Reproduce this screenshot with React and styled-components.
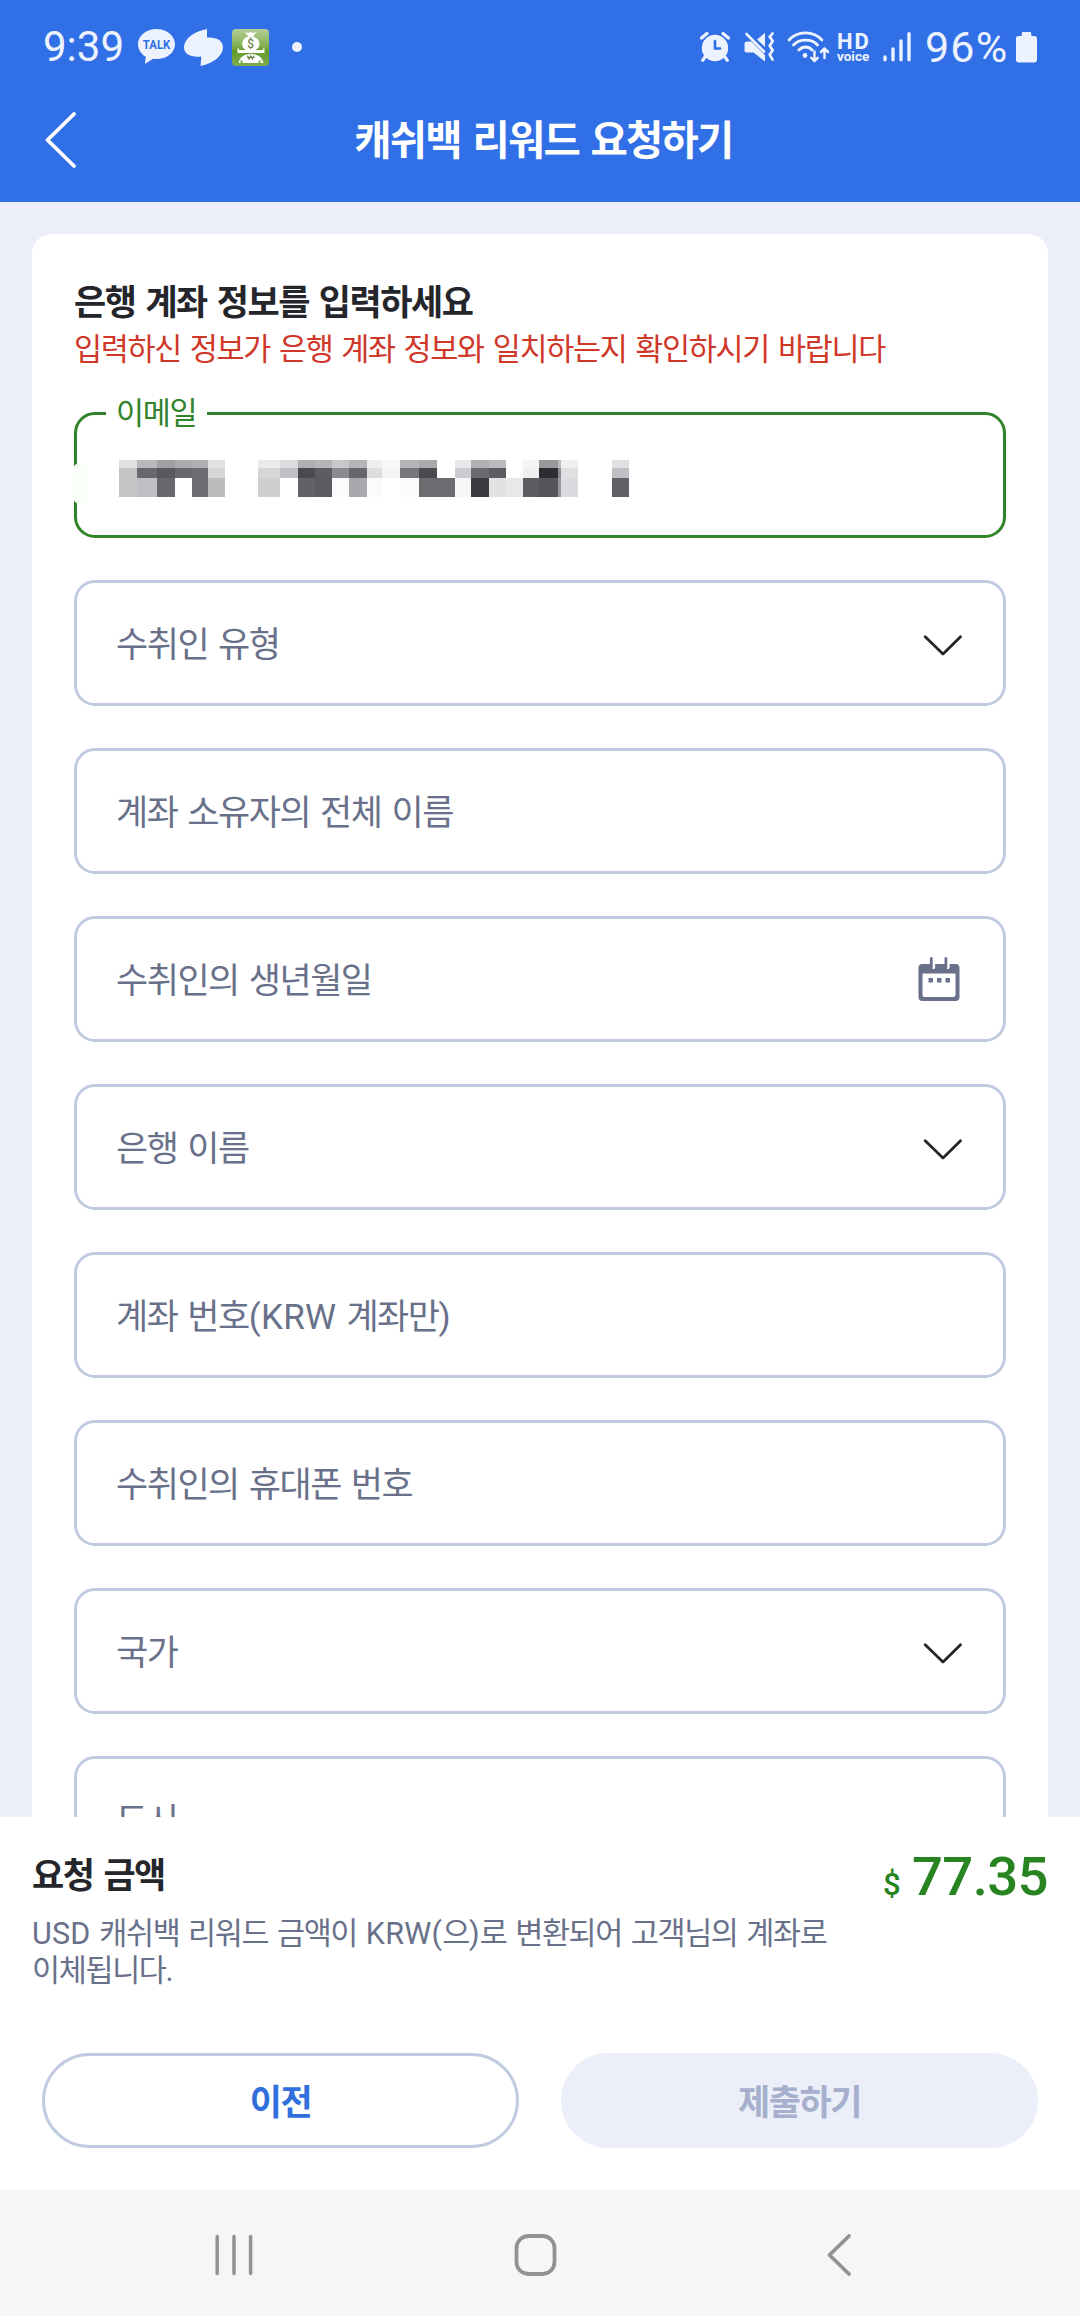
import styled, { createGlobalStyle } from "styled-components";

const GlobalStyle = createGlobalStyle`
  * {
    box-sizing: border-box;
  }
  body {
    margin: 0;
    overflow: hidden;
    background: #fff;
    font-family: Roboto, "Noto Sans CJK KR", sans-serif;
    word-break: keep-all;
  }
  svg {
    display: block;
    flex-shrink: 0;
  }
`;

const Screen = styled.div`
  display: flex;
  flex-direction: column;
  width: 1080px;
  height: 2316px;
  overflow: hidden;
  background: #eceff9;
`;

const StatusBar = styled.div`
  display: flex;
  align-items: center;
  justify-content: space-between;
  height: 94px;
  padding: 0 43px;
  background: #316fe7;
  color: #edf3fe;
`;
const StatusGroup = styled.div`
  display: flex;
  align-items: center;
`;
const Time = styled.span`
  width: 95px;
  font-size: 42px;
  line-height: 48px;
`;
const StatusIcon = styled.svg`
  margin-left: ${({ $gap }) => $gap || 0}px;
`;
const Dot = styled.span`
  width: 10px;
  height: 10px;
  margin-left: 23px;
  border-radius: 50%;
  background: #edf3fe;
`;
const HdVoice = styled.div`
  display: flex;
  flex-direction: column;
  width: 34px;
  margin-left: 7px;
  font-weight: 700;
`;
const Hd = styled.span`
  font-size: 22px;
  line-height: 18px;
  letter-spacing: 2px;
`;
const Voice = styled.span`
  font-size: 13.5px;
  line-height: 11px;
`;
const Battery = styled.span`
  width: 85px;
  margin-left: 14px;
  font-size: 43px;
  line-height: 48px;
  letter-spacing: 1.2px;
`;

const AppBar = styled.header`
  display: grid;
  grid-template-columns: 107px 1fr 100px;
  align-items: center;
  height: 108px;
  padding: 0 0 14px;
  background: #316fe7;
`;
const BackButton = styled.button`
  display: flex;
  padding: 2px 0 0 43px;
  border: none;
  background: none;
`;
const Title = styled.h1`
  margin: 0;
  color: #fff;
  font-size: 40.5px;
  font-weight: 700;
  line-height: 56px;
  letter-spacing: -0.043em;
  word-spacing: 0.08em;
  text-align: center;
`;

const Content = styled.main`
  flex: 1;
  min-height: 0;
  overflow: hidden;
  padding: 32px 32px 0;
`;
const Card = styled.section`
  padding: 46px 42px;
  border-radius: 20px;
  background: #fff;
`;
const Heading = styled.h2`
  margin: 0;
  color: #25262b;
  font-size: 35px;
  font-weight: 700;
  line-height: 48px;
  letter-spacing: -0.043em;
  word-spacing: 0.08em;
`;
const Warning = styled.p`
  margin: 2px 0 42px;
  color: #cf3729;
  font-size: 30.5px;
  line-height: 40px;
  letter-spacing: -0.043em;
  word-spacing: 0.085em;
`;
const Fields = styled.div`
  display: flex;
  flex-direction: column;
  gap: 42px;
`;
const Field = styled.div`
  position: relative;
  display: flex;
  align-items: center;
  justify-content: space-between;
  height: 126px;
  padding: 4px 41px 0 39px;
  border: 3px solid ${({ $active }) => ($active ? "#31832a" : "#c0cbdf")};
  border-radius: 21px;
`;
const Placeholder = styled.span`
  padding-top: 1px;
  color: #69718a;
  font-size: 35px;
  line-height: 48px;
  letter-spacing: -0.043em;
  word-spacing: 0.08em;
`;
// latin letters and brackets keep their natural width
const Latin = styled.span`
  letter-spacing: 0.008em;
`;
const FloatingLabel = styled.span`
  position: absolute;
  top: -21px;
  left: 29px;
  padding: 0 11px 0 10px;
  background: #fff;
  color: #31832a;
  font-size: 30.5px;
  line-height: 40px;
  letter-spacing: -0.043em;
`;
const Smudge = styled.span`
  position: absolute;
  top: 48px;
  left: -4px;
  width: 14px;
  height: 41px;
  border-radius: 7px;
  background: #fbfffa;
`;

const Footer = styled.footer`
  height: 373px;
  padding: 36px 32px 42px;
  background: #fff;
`;
const AmountRow = styled.div`
  display: flex;
  justify-content: space-between;
`;
const Amount = styled.div`
  display: flex;
  align-items: baseline;
  gap: 12px;
  height: 49px;
  margin-top: -1px;
  color: #278420;
  font-size: 54.5px;
  font-weight: 500;
  line-height: 48px;
  letter-spacing: -0.6px;
`;
const Currency = styled.span`
  font-size: 31px;
`;
const Note = styled.p`
  width: 820px;
  height: 75px;
  margin: 14px 0 63px;
  color: #69718a;
  font-size: 30.5px;
  line-height: 37px;
  letter-spacing: -0.044em;
  word-spacing: 0.08em;
`;
const Actions = styled.div`
  display: grid;
  grid-template-columns: 1fr 1fr;
  gap: 42px;
  padding: 0 10px;
`;
const ActionButton = styled.button`
  height: 95px;
  padding: 6px 0 0;
  border: 3px solid ${({ $muted }) => ($muted ? "#eceff9" : "#c0cbdf")};
  border-radius: 48px;
  background: ${({ $muted }) => ($muted ? "#eceff9" : "#fff")};
  color: ${({ $muted }) => ($muted ? "#a6b0cc" : "#316fdc")};
  font-family: inherit;
  font-size: 35px;
  font-weight: 700;
  line-height: 48px;
  letter-spacing: -0.043em;
`;

const NavBar = styled.nav`
  display: grid;
  grid-template-columns: 300px 313px 27px;
  height: 126px;
  padding: 43px 0 0 213px;
  background: #f5f6f8;
`;

const TalkIcon = () => (
  <StatusIcon width="37" height="36" viewBox="0 0 37 36" fill="#edf3fe">
    <path d="M18.5 0C8.3 0 0 6.8 0 15.200c0 5.400 3.200 9.800 7.800 12.500L6.900 35l8.200-5.200c1.100.2 2.200.3 3.400.3C28.700 30.100 37 23.600 37 15.200S28.700 0 18.500 0z" />
    <text x="4.800" y="20" fontSize="12.300" fontWeight="700" fill="#316fe7" textLength="27.500" lengthAdjust="spacingAndGlyphs">
      TALK
    </text>
  </StatusIcon>
);

const LeafIcon = () => (
  <StatusIcon $gap={9} width="39" height="37" viewBox="0 0 39 37" fill="#edf3fe">
    <path d="M23 0v8.500C33 8 39 11.500 39 18.500c0 8-9 15.500-22.500 18.500l.8-9.500C6.500 28.500 0 25 0 18.500 0 10 9.500 2.500 23 0z" />
  </StatusIcon>
);

const MoneyIcon = () => (
  <StatusIcon $gap={9} width="37" height="37" viewBox="0 0 37 37">
    <defs>
      <linearGradient id="money" x1="0" y1="0" x2="0" y2="1">
        <stop offset="0" stopColor="#b4cf97" />
        <stop offset="0.45" stopColor="#83b052" />
        <stop offset="0.6" stopColor="#649c2b" />
        <stop offset="1" stopColor="#7fac4b" />
      </linearGradient>
    </defs>
    <rect width="37" height="37" rx="4" fill="url(#money)" />
    <path d="M13 3l3 1 2.500-1L21 4l3.500-1-3.500 4.500c4 1 6.500 4 6.500 7.500 0 3-1.700 5-4 6H31v-1.500h1.500V24h-27v-4.500H7V21h7c-2.500-1-3.800-3-3.800-6 0-3.500 2.300-6.500 6.300-7.500z" fill="#fff" />
    <path d="M6.500 34c1-6 6-9 12.300-9S30 28 31.500 34z" fill="#fff" />
    <path d="M8.500 31l2 3m-2 0l2-2m18-1l-2 3m2 0l-2-2" stroke="#649c2b" strokeWidth="1" />
    <text x="18.700" y="19" fontSize="12" textAnchor="middle" fill="#56722f">$</text>
    <path d="M15.500 26.500l1.500 4 1.700-4 1.700 4 1.500-4M15 28.300h7.500" stroke="#56722f" strokeWidth="0.900" fill="none" />
  </StatusIcon>
);

const AlarmIcon = () => (
  <StatusIcon width="30" height="30" viewBox="0 0 30 30" fill="none" stroke="#edf3fe">
    <circle cx="15" cy="16" r="13.200" fill="#edf3fe" stroke="none" />
    <path d="M1.500 6L7 1.500M28.500 6L23 1.500M5 25l-2.300 3.300M25 25l2.300 3.300" strokeWidth="3.200" strokeLinecap="round" />
    <path d="M15 9v7.500h5" stroke="#316fe7" strokeWidth="2.700" strokeLinecap="round" strokeLinejoin="round" />
  </StatusIcon>
);

const MuteIcon = () => (
  <StatusIcon $gap={14} width="31" height="30" viewBox="0 0 31 30" fill="#edf3fe">
    <path d="M3 9.500h4.500L21 23v6.500L9.500 20.500H3c-1.700 0-2.500-1-2.500-2.300v-6.400c0-1.300.8-2.300 2.500-2.300zM13 7.500L21 .8V15z" />
    <path d="M2.500 2L20 19.500" stroke="#edf3fe" strokeWidth="2.600" strokeLinecap="round" />
    <path d="M28.500 1.500l-2.800 3.300 3 4.300-3 4.600 3 4.600-3 4.300 2.800 5" fill="none" stroke="#edf3fe" strokeWidth="2.700" strokeLinecap="round" strokeLinejoin="round" />
  </StatusIcon>
);

const WifiIcon = () => (
  <StatusIcon $gap={12} width="43" height="32" viewBox="0 0 43 32" fill="none" stroke="#edf3fe" strokeWidth="2.800" strokeLinecap="round" strokeLinejoin="round">
    <path d="M2 9c8.500-9.500 24.500-9.500 33 0M6.500 14c6-6.500 18.500-6.500 24 0M11.800 19c4-4 9.600-4 13.400 0" />
    <circle cx="18" cy="24.500" r="2.400" fill="#edf3fe" stroke="none" />
    <path d="M27.500 20.500v9.500m-3.200-3.200l3.200 3.200 3.200-3.200M37.500 27V17.500m-3.500 3.500l3.500-3.500 3.500 3.500" strokeWidth="2.500" />
  </StatusIcon>
);

const SignalIcon = () => (
  <StatusIcon $gap={12} width="28" height="30" viewBox="0 0 28 30" stroke="#edf3fe" strokeWidth="3.400" strokeLinecap="round">
    <path d="M2 25v2.800M10 17v10.800M18 9v18.800M26 1.800v26" />
  </StatusIcon>
);

const BatteryIcon = () => (
  <StatusIcon $gap={6} width="21" height="31" viewBox="0 0 22 31" fill="#edf3fe" preserveAspectRatio="none">
    <path d="M7.500 0h7c1 0 1.500.6 1.500 1.500V4h3.500C21 4 22 5 22 6.500v21c0 2-1 3-3 3H3c-2 0-3-1-3-3v-21C0 5 1 4 2.500 4H6V1.500C6 .6 6.500 0 7.500 0z" />
  </StatusIcon>
);

const ChevronIcon = () => (
  <svg width="40" height="24" viewBox="0 0 40 24" fill="none" stroke="#25262b" strokeWidth="2.800" strokeLinecap="round" strokeLinejoin="round">
    <path d="M3.200 3.700L21 21 38.500 3.700" />
  </svg>
);

const CalendarIcon = () => (
  <svg width="44" height="50" viewBox="0 0 44 50">
    <path d="M4.500 8h33a4 4 0 0 1 4 4v29a4 4 0 0 1-4 4h-33a4 4 0 0 1-4-4v-29a4 4 0 0 1 4-4zM4.500 17.500v21.500c0 1.300.8 2 2 2h29c1.200 0 2-.7 2-2V17.500z" fill="#69718a" fillRule="evenodd" />
    <path d="M15.500 4.500v7M30 4.500v7" stroke="#fff" strokeWidth="3.200" strokeLinecap="round" />
    <path d="M13.300 2.500v9M27.900 2.500v9" stroke="#69718a" strokeWidth="2.800" strokeLinecap="round" />
    <path d="M10.500 22h4.500v4.500h-4.500zM19 22h4.500v4.500H19zM27.500 22H32v4.500h-4.500z" fill="#69718a" />
  </svg>
);

// [x, width, top, middle, bottom]
const mosaic = [
  [0, 18, "#e2e2e5", "#c5c5c8", "#c5c5c8"],
  [18, 20, "#b8b8bb", "#67686c", "#c0c0c4"],
  [38, 18, "#a0a0a4", "#58595d", "#66686d"],
  [56, 17, "#ababae", "#67686c", "#fff"],
  [73, 16, "#b0b0b3", "#6c6d71", "#6c6e73"],
  [89, 17, "#e2e2e5", "#d6d6d8", "#bcbcbf"],
  [139, 22, "#ebebec", "#d6d6d8", "#cfcfd2"],
  [161, 18, "#dddddf", "#c0c0c4", "#fff"],
  [179, 17, "#b0b0b3", "#4a4b50", "#606267"],
  [196, 17, "#b5b5b8", "#5c5d61", "#5a5c61"],
  [213, 17, "#c8c8ca", "#8a8b8f", "#fbfbfb"],
  [230, 18, "#b5b5b8", "#66676b", "#a8a9ac"],
  [248, 15, "#eeeeef", "#dddddf", "#fbfbfb"],
  [263, 18, "#f8f8f8", "#f3f3f3", "#fff"],
  [281, 19, "#b5b5b8", "#77787c", "#fbfbfb"],
  [300, 18, "#aaaaad", "#4a4b50", "#6a6c70"],
  [318, 18, "#fff", "#fff", "#6a6c70"],
  [336, 16, "#e8e8ea", "#ccccd0", "#f6f6f6"],
  [352, 18, "#b0b0b3", "#6a6b6f", "#3a3b3f"],
  [370, 17, "#bbbbbd", "#5c5d61", "#e2e2e4"],
  [387, 17, "#fff", "#fff", "#e8e8ea"],
  [404, 16, "#f4f5f5", "#eeeff0", "#5c5d61"],
  [420, 19, "#99999b", "#2c2d31", "#55565a"],
  [439, 3, "#bbbbbd", "#8a8b8f", "#99999b"],
  [442, 17, "#efeff0", "#e0e0e2", "#dadbdf"],
  [493, 17, "#e0e0e2", "#c0c0c4", "#606166"],
];

const HiddenEmail = () => (
  <svg width="513" height="39" viewBox="-3 -2 513 39" shapeRendering="crispEdges">
    {mosaic.map(([x, w, top, middle, bottom]) => (
      <g key={x}>
        <rect x={x} y="0" width={w} height="8" fill={top} />
        <rect x={x} y="8" width={w} height="10" fill={middle} />
        <rect x={x} y="18" width={w} height="19" fill={bottom} />
      </g>
    ))}
  </svg>
);

const fields = [
  { label: "수취인 유형", icon: "select" },
  { label: "계좌 소유자의 전체 이름" },
  { label: "수취인의 생년월일", icon: "date" },
  { label: "은행 이름", icon: "select" },
  { label: <>계좌 번호<Latin>(KRW</Latin> 계좌만<Latin>)</Latin></> },
  { label: "수취인의 휴대폰 번호" },
  { label: "국가", icon: "select" },
  { label: "도시" },
];

const App = () => {
  return (
    <>
      <GlobalStyle />
      <Screen>
        <StatusBar>
          <StatusGroup>
            <Time>9:39</Time>
            <TalkIcon />
            <LeafIcon />
            <MoneyIcon />
            <Dot />
          </StatusGroup>
          <StatusGroup>
            <AlarmIcon />
            <MuteIcon />
            <WifiIcon />
            <HdVoice>
              <Hd>HD</Hd>
              <Voice>voice</Voice>
            </HdVoice>
            <SignalIcon />
            <Battery>96%</Battery>
            <BatteryIcon />
          </StatusGroup>
        </StatusBar>
        <AppBar>
          <BackButton aria-label="뒤로">
            <svg width="36" height="60" viewBox="0 0 36 60" fill="none" stroke="#fff" strokeWidth="3.800" strokeLinecap="round" strokeLinejoin="round">
              <path d="M31 2L4.500 28 31 54" />
            </svg>
          </BackButton>
          <Title>캐쉬백 리워드 요청하기</Title>
        </AppBar>
        <Content>
          <Card>
            <Heading>은행 계좌 정보를 입력하세요</Heading>
            <Warning>입력하신 정보가 은행 계좌 정보와 일치하는지 확인하시기 바랍니다</Warning>
            <Fields>
              <Field $active>
                <FloatingLabel>이메일</FloatingLabel>
                <Smudge />
                <HiddenEmail />
              </Field>
              {fields.map(({ label, icon }, i) => (
                <Field key={i}>
                  <Placeholder>{label}</Placeholder>
                  {icon === "select" && <ChevronIcon />}
                  {icon === "date" && <CalendarIcon />}
                </Field>
              ))}
            </Fields>
          </Card>
        </Content>
        <Footer>
          <AmountRow>
            <Heading>요청 금액</Heading>
            <Amount>
              <Currency>$</Currency>
              <span>77.35</span>
            </Amount>
          </AmountRow>
          <Note>
            <Latin>USD</Latin> 캐쉬백 리워드 금액이 <Latin>KRW(</Latin>으<Latin>)</Latin>로 변환되어 고객님의 계좌로 이체됩니다.
          </Note>
          <Actions>
            <ActionButton>이전</ActionButton>
            <ActionButton $muted>제출하기</ActionButton>
          </Actions>
        </Footer>
        <NavBar>
          <svg width="42" height="44" viewBox="0 0 42 44" stroke="#929292" strokeWidth="3.500" strokeLinecap="round">
            <path d="M4.200 3.500v37M21 3.500v37M37.600 3.500v37" />
          </svg>
          <svg width="44" height="44" viewBox="0 0 44 44" fill="none" stroke="#929292" strokeWidth="3.800">
            <rect x="3.500" y="3" width="38" height="38" rx="12" />
          </svg>
          <svg width="27" height="44" viewBox="0 0 27 44" fill="none" stroke="#929292" strokeWidth="3.800" strokeLinecap="round" strokeLinejoin="round">
            <path d="M23 3L3.500 22 23 41" />
          </svg>
        </NavBar>
      </Screen>
    </>
  );
};

export default App;
